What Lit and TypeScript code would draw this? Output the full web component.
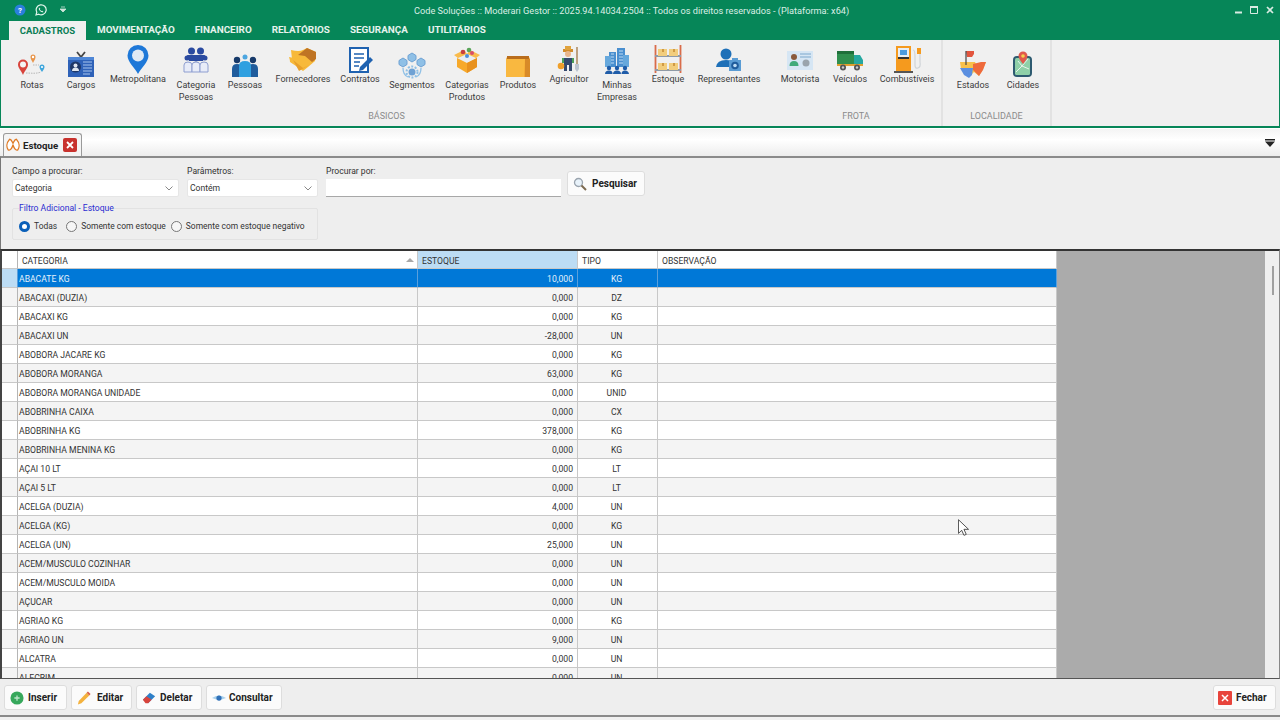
import { LitElement, html, css, svg } from "lit";
import { customElement } from "lit/decorators.js";

const I: Record<string, unknown> = {
  rotas: svg`<path d="M5 25C3 20 0 18 0 14.500a5 5 0 0 1 10 0C10 18 7 20 5 25Z" fill="#d8443c"/><circle cx="5" cy="14.500" r="3" fill="#f4f4f4"/><path d="M15 13C13.500 10 12.500 9 12.500 7a2.500 2.500 0 0 1 5 0C17.500 9 16.500 10 15 13Z" fill="#e8954a"/><circle cx="15" cy="7" r="1.200" fill="#fff"/><path d="M24 22C22.500 19.500 21.500 18.500 21.500 17a2.500 2.500 0 0 1 5 0C26.500 18.500 25.500 19.500 24 22Z" fill="#3fa6dc"/><circle cx="24" cy="17" r="1.100" fill="#fff"/><path d="M15 15l6 0M8 23c5 0 10 1 15-1" stroke="#b8b8b8" stroke-width="1" stroke-dasharray="1.500 1" fill="none"/>`,
  cargos: svg`<path d="M10 1l4 5 4-5" stroke="#444" stroke-width="1.800" fill="none"/><rect x="1" y="6" width="26" height="20" fill="#2f62b8"/><rect x="1" y="6" width="26" height="3" fill="#4e86d6"/><circle cx="8.500" cy="16" r="5.500" fill="#1e3768"/><circle cx="8.500" cy="14.500" r="2" fill="#dfe6f0"/><path d="M5 20a3.500 3.500 0 0 1 7 0Z" fill="#dfe6f0"/><path d="M16 11h9M16 14h9M16 17h9M16 20h9M16 23h7" stroke="#a8c4ee" stroke-width="1"/>`,
  metro: svg`<path d="M14 28C11 22 3.500 16 3.500 9.500a10.500 10.500 0 0 1 21 0C24.500 16 17 22 14 28Z" fill="#1e78d8"/><circle cx="14" cy="9.500" r="6" fill="#dfe9f4"/>`,
  catpess: svg`<g fill="#2a4aa0"><circle cx="9.500" cy="5" r="3.500"/><circle cx="18.500" cy="5" r="3.500"/><circle cx="5" cy="12" r="2.500"/><circle cx="14" cy="13" r="2.500"/><circle cx="23" cy="12" r="2.500"/><path d="M5 9h18l-2 6H7Z"/></g><g fill="#e8ecf8" stroke="#8e9ed0" stroke-width="1"><path d="M2 26V19q0-3 4-3t4 3v7Z"/><path d="M10 26V19q0-3 4-3t4 3v7Z"/><path d="M18 26V19q0-3 4-3t4 3v7Z"/></g>`,
  pessoas: svg`<circle cx="14" cy="6" r="2.500" fill="#4da6e0"/><circle cx="6" cy="9" r="3.200" fill="#173a6a"/><circle cx="22" cy="9" r="3.200" fill="#173a6a"/><path d="M1 26V18q0-5 5-5t5 5v8Z" fill="#1f5c9c"/><path d="M17 26V18q0-5 5-5t5 5v8Z" fill="#1f5c9c"/><path d="M8 26V15q0-5 6-5t6 5v11Z" fill="#2fa0e0"/>`,
  fornec: svg`<path d="M2 4q8 2 12 0l3 8-5 5-9-4Z" fill="#f7b93a"/><path d="M14 4l4-2 9 4-1 9-7 6-5 4-4-3-9-6q0-2-1-5l10 2Z" fill="#f7b93a"/><path d="M9 9l9-7 9 4v7l-4 3-7-6Z" fill="#bf7424"/><path d="M4 14l10 8 6-3-10 6Z" fill="#e89f2a"/>`,
  contr: svg`<path d="M4 2h18v24H4Z" fill="#fff" stroke="#1f62b0" stroke-width="2"/><path d="M8 8h10M8 12h10M8 16h6M8 20h5" stroke="#1f62b0" stroke-width="1.600"/><path d="M14 21l10-10 3 3-10 10-4 1Z" fill="#1f62b0"/>`,
  segm: svg`<g fill="#8fc0e6" stroke="#6fa2d4" stroke-width="1"><path d="M14 2l4 2.500v4L14 11l-4-2.500v-4Z"/><path d="M5 7l4 2.500v4L5 16l-4-2.500v-4Z"/><path d="M23 7l4 2.500v4L23 16l-4-2.500v-4Z"/></g><circle cx="14" cy="21" r="3.500" fill="#6fa2d4"/><circle cx="14" cy="21" r="5.500" fill="none" stroke="#8fc0e6" stroke-width="2" stroke-dasharray="2 1.500"/><path d="M5 17q0 7 5 9M23 17q0 7-5 9" stroke="#8fc0e6" stroke-width="1.300" fill="none"/>`,
  catprod: svg`<path d="M4 12l10-5 10 5v9l-10 6-10-6Z" fill="#f7a92a"/><path d="M4 12l10 5 10-5-10-5Z" fill="#e8edf2"/><path d="M14 17v10l10-6v-9Z" fill="#e8911e"/><path d="M1 9l4 3 9-4-3-4ZM27 9l-4 3-9-4 3-4Z" fill="#f9bb4c"/><circle cx="10" cy="6" r="2.300" fill="#c8403e"/><circle cx="16" cy="4" r="2.300" fill="#5aa55a"/><circle cx="19" cy="7" r="2" fill="#d84d68"/><circle cx="14" cy="10" r="2" fill="#4b8fd8"/>`,
  prod: svg`<path d="M3 6h22l1 2v18H2V8Z" fill="#f3a52e"/><path d="M2 8h19l-1 18H2Z" fill="#f9b840"/><path d="M3 5h22v3H3Z" fill="#b96d1c"/><path d="M21 8h5v18h-5Z" fill="#d88a28"/>`,
  agric: svg`<path d="M8 4h10v3H8Z" fill="#d28c2c"/><path d="M10 1h6v4h-6Z" fill="#e0a23c"/><circle cx="13" cy="9" r="3" fill="#e8b68c"/><path d="M7 13h12v5H7Z" fill="#4ba05a"/><path d="M9 13h8v13h-3v-6h-2v6H9Z" fill="#34496e"/><circle cx="6" cy="21" r="3.300" fill="#ef9f2a"/><path d="M22 2v17" stroke="#9a6b35" stroke-width="1.200"/><path d="M20 19h4v5l-2 3-2-3Z" fill="#bcc4d0"/>`,
  minhas: svg`<path d="M6 6h7v15H6ZM14 2h8v19h-8Z" fill="#4a8fcf"/><path d="M2 10h6v11H2ZM20 9h6v12h-6Z" fill="#66a8dc"/><path d="M8 8h3M8 11h3M8 14h3M8 17h3M16 5h4M16 8h4M16 11h4M16 14h4M16 17h4" stroke="#bddcf4" stroke-width="1.200"/><g fill="#1f5ca8"><circle cx="6" cy="22" r="2.200"/><circle cx="14" cy="22" r="2.200"/><circle cx="22" cy="22" r="2.200"/><path d="M2 28q0-3.500 4-3.500t3.500 3.500ZM10 28q0-3.500 4-3.500t4 3.500ZM18.500 28q0-3.500 3.500-3.500t4 3.500Z"/></g>`,
  estoque: svg`<path d="M1.500 0v28M26.500 0v28" stroke="#d96c4a" stroke-width="1.800"/><path d="M1 11h26M1 25h26" stroke="#8f9aa6" stroke-width="2"/><path d="M4 4h9v7H4ZM15 4h9v7h-9ZM4 18h9v7H4ZM15 18h9v7h-9Z" fill="#f2cd7c"/><path d="M8 4h2v3H8ZM19 4h2v3h-2ZM8 18h2v3H8ZM19 18h2v3h-2Z" fill="#d09a44"/>`,
  repr: svg`<circle cx="11" cy="8" r="5.500" fill="#1e70b8"/><path d="M1 21q1-7 10-7 6 0 8 3v4Z" fill="#1e70b8"/><path d="M14 14h12v11H14Z" fill="#5a9cd4" /><circle cx="20" cy="19.500" r="3.800" fill="#1f5c9c"/><circle cx="20" cy="19.500" r="1.800" fill="#bcdcf4"/><path d="M17 12h6v2h-6Z" fill="#5a9cd4"/>`,
  motor: svg`<rect x="1" y="5" width="26" height="19" fill="#d6e6f4"/><circle cx="8" cy="11" r="3" fill="#8a5a3c"/><path d="M3.500 20q0-5 4.500-5t4.500 5Z" fill="#3faa7a"/><path d="M14 8h11M14 11h11" stroke="#7da8cc" stroke-width="1"/><circle cx="20" cy="17" r="3.500" fill="#9aa4ac"/>`,
  veic: svg`<path d="M1 5h17v13H1Z" fill="#2f8f4e"/><path d="M1 5h17v3H1Z" fill="#1f6f3a"/><path d="M18 9h6l3 5v5h-9Z" fill="#25a8a0"/><path d="M1 18h26v2H1Z" fill="#e0a030"/><circle cx="7" cy="21.500" r="3" fill="#555"/><circle cx="21" cy="21.500" r="3" fill="#555"/><circle cx="7" cy="21.500" r="1.200" fill="#ccc"/><circle cx="21" cy="21.500" r="1.200" fill="#ccc"/>`,
  comb: svg`<path d="M3 1h15v25H3Z" fill="#f59a1e"/><path d="M1 26h19v2H1Z" fill="#555"/><path d="M5 3h11v10H5Z" fill="#e8eef4"/><path d="M7 5h7v5H7Z" fill="#4b9be0"/><path d="M5 12h11v2H5Z" fill="#333"/><path d="M20 5q2 0 2 6v9q0 4 3 3t2-6V8" fill="none" stroke="#d0d4d8" stroke-width="1.200"/><path d="M24 3h4v6h-4Z" fill="#f59a1e"/>`,
  estados: svg`<path d="M1 12h15l2 4 4-3 5-1-3 7-4 7-5-4-3 3-5-3-1-3H2Z" fill="#f8c04a"/><path d="M1 18h13l-1 7-3 3-5-3Z" fill="#5b8fe0"/><path d="M14 14l8-2 5 0-3 8-4 6-6-6Z" fill="#ee6a3c"/><path d="M7 1h8v3l-2 3H8Z" fill="#e2553e"/><path d="M7 1v14" stroke="#444" stroke-width="1.200"/>`,
  cidades: svg`<rect x="4" y="6" width="19" height="21" rx="4" fill="#2d5a70"/><rect x="6" y="8" width="15" height="17" rx="1.500" fill="#8fd0a8"/><path d="M7 22l6-6 7 3M9 11l4 5 6-7" stroke="#e8f4ec" stroke-width="1" fill="none"/><path d="M14 14C12 11 9.500 9 9.500 6a4.500 4.500 0 0 1 9 0C18.500 9 16 11 14 14Z" fill="#e0584c"/><circle cx="14" cy="6" r="1.800" fill="#f4d04c"/>`,
};

type Item = { l: string[]; w: number; cy: number; low: boolean; i: string };
const basicos: Item[] = [
  { l: ["Rotas"], w: 60, cy: 64, low: true, i: "rotas" },
  { l: ["Cargos"], w: 38, cy: 65, low: true, i: "cargos" },
  { l: ["Metropolitana"], w: 76, cy: 60, low: false, i: "metro" },
  { l: ["Categoria", "Pessoas"], w: 40, cy: 60, low: true, i: "catpess" },
  { l: ["Pessoas"], w: 58, cy: 65, low: true, i: "pessoas" },
  { l: ["Fornecedores"], w: 58, cy: 60, low: false, i: "fornec" },
  { l: ["Contratos"], w: 56, cy: 60, low: false, i: "contr" },
  { l: ["Segmentos"], w: 48, cy: 65, low: true, i: "segm" },
  { l: ["Categorias", "Produtos"], w: 62, cy: 60, low: true, i: "catprod" },
  { l: ["Produtos"], w: 40, cy: 65, low: true, i: "prod" },
  { l: ["Agricultor"], w: 62, cy: 59, low: false, i: "agric" },
  { l: ["Minhas", "Empresas"], w: 34, cy: 60, low: true, i: "minhas" },
  { l: ["Estoque"], w: 68, cy: 59, low: false, i: "estoque" },
  { l: ["Representantes"], w: 54, cy: 60, low: false, i: "repr" },
];
const frota: Item[] = [
  { l: ["Motorista"], w: 58, cy: 60, low: false, i: "motor" },
  { l: ["Veículos"], w: 42, cy: 60, low: false, i: "veic" },
  { l: ["Combustíveis"], w: 72, cy: 59, low: false, i: "comb" },
];
const local: Item[] = [
  { l: ["Estados"], w: 60, cy: 64, low: true, i: "estados" },
  { l: ["Cidades"], w: 40, cy: 64, low: true, i: "cidades" },
];

const rows: [string, string, string][] = [
  ["ABACATE KG", "10,000", "KG"],
  ["ABACAXI (DUZIA)", "0,000", "DZ"],
  ["ABACAXI KG", "0,000", "KG"],
  ["ABACAXI UN", "-28,000", "UN"],
  ["ABOBORA JACARE KG", "0,000", "KG"],
  ["ABOBORA MORANGA", "63,000", "KG"],
  ["ABOBORA MORANGA UNIDADE", "0,000", "UNID"],
  ["ABOBRINHA CAIXA", "0,000", "CX"],
  ["ABOBRINHA KG", "378,000", "KG"],
  ["ABOBRINHA MENINA KG", "0,000", "KG"],
  ["AÇAI 10 LT", "0,000", "LT"],
  ["AÇAI 5 LT", "0,000", "LT"],
  ["ACELGA (DUZIA)", "4,000", "UN"],
  ["ACELGA (KG)", "0,000", "KG"],
  ["ACELGA (UN)", "25,000", "UN"],
  ["ACEM/MUSCULO COZINHAR", "0,000", "UN"],
  ["ACEM/MUSCULO MOIDA", "0,000", "UN"],
  ["AÇUCAR", "0,000", "UN"],
  ["AGRIAO KG", "0,000", "KG"],
  ["AGRIAO UN", "9,000", "UN"],
  ["ALCATRA", "0,000", "UN"],
  ["ALECRIM", "0,000", "UN"],
];

@customElement("app-root")
export class AppRoot extends LitElement {
  static styles = css`
    :host { display: flex; flex-direction: column; position: relative; width: 1280px; height: 720px; overflow: hidden; background: #eeeeee; font: 9px Roboto, sans-serif; color: #333; }
    * { box-sizing: border-box; }
    .title { height: 20px; background: #068658; display: flex; align-items: center; color: #dcefe6; flex: none; position: relative; padding-left: 14px; gap: 9px; }
    .title .text { position: absolute; left: 414px; top: 4px; white-space: nowrap; line-height: 14px; font-size: 9.2px; }
    .ctrl { margin-left: auto; display: flex; gap: 8px; padding-right: 6px; align-items: center; }
    .menu { height: 20px; background: #068658; display: flex; flex: none; padding-left: 9px; font-weight: 700; color: #e6f3ed; font-size: 9.9px; }
    .menu div { line-height: 20px; white-space: nowrap; margin-right: 20px; }
    .menu .on { background: #f0f0f0; color: #0a7d55; margin-right: 11px; width: 77px; text-align: center; margin-top: 1px; line-height: 19px; font-size: 9.5px; }
    .ribbon { height: 88px; flex: none; background: #f0f0f0; border: 1px solid #068658; border-width: 0 1px 2px; display: flex; padding-left: 1px; }
    .grp { position: relative; display: flex; flex-direction: column; flex: none; }
    .grp.div { border-right: 2px solid #e2e2e2; }
    .items { display: flex; height: 70px; padding-top: 2px; }
    .cap { text-align: center; color: #8b8b8b; line-height: 12px; }
    .item { display: flex; flex-direction: column; align-items: center; flex: none; }
    .ico { height: 31px; display: flex; justify-content: center; }
    .ico.low { height: 37px; }
    .ico svg { width: 28px; height: 28px; flex: none; overflow: visible; }
    .lbl { line-height: 12px; white-space: nowrap; text-align: center; color: #3c3c3c; }
    .tabs { height: 28px; flex: none; background: linear-gradient(#f4f4f4, #ffffff 40%, #ededed); display: flex; align-items: flex-end; padding-left: 3px; position: relative; border-top: 1px solid #fff; }
    .tab { height: 23px; width: 79px; background: #f4f4f4; border: 1px solid #9a9a9a; border-bottom: 0; border-radius: 3px 3px 0 0; display: flex; align-items: center; padding-left: 2px; gap: 3px; font-weight: 700; color: #222; font-size: 9.7px; }
    .tab .x { width: 14px; height: 14px; background: #c8322e; border-radius: 2px; margin-left: 2px; color: #fff; display: flex; align-items: center; justify-content: center; }
    .collapse { position: absolute; right: 5px; top: 9px; width: 10px; height: 10px; }
    .panel { height: 93px; flex: none; background: #eeeeee; border-top: 2px solid #8b8b8b; padding: 7px 0 0 11px; border-left: 1px solid #777; font-size: 8.6px; }
    .f-row { display: flex; gap: 8px; align-items: flex-start; }
    .fld { display: flex; flex-direction: column; }
    .fld label { line-height: 13px; height: 14px; color: #333; }
    .sel { height: 18px; background: #fff; border-radius: 2px; border: 1px solid #e6e6e6; display: flex; align-items: center; justify-content: space-between; padding: 0 5px 0 2px; }
    .inp { height: 18px; width: 235px; background: #fff; border-bottom: 1px solid #a8a8a8; }
    .btn { height: 25px; background: #fbfbfb; border: 1px solid #dddddd; border-radius: 3px; display: flex; align-items: center; font-weight: 700; color: #222; flex: none; font-size: 10px; }
    .search { width: 78px; margin-top: 6px; padding-left: 5px; gap: 5px; margin-left: -2px; }
    fieldset { margin: 5px 0 0; width: 306px; height: 38px; padding: 0 0 0 6px; border: 1px solid #e2e2e2; border-radius: 2px; display: flex; align-items: center; }
    legend { padding: 0; color: #2a2ad0; line-height: 12px; }
    .opts { display: flex; align-items: center; margin-top: -1px; font-size: 8.45px; }
    .r { width: 11px; height: 11px; border-radius: 50%; border: 1px solid #777; background: #f6f6f6; margin-right: 4px; flex: none; }
    .r.on { border: 3px solid #0a5fb8; background: #fff; }
    .opts span { margin-right: 5px; white-space: nowrap; }
    .opts span.first { margin-right: 9px; }
    .grid { flex: 1; min-height: 0; display: flex; background: #ababab; border-top: 2px solid #333; border-left: 2px solid #444; border-right: 1px solid #888; border-bottom: 1px solid #555; overflow: hidden; }
    .tbl { width: 1055px; flex: none; background: #fff; }
    .tr { display: grid; grid-template-columns: 16px 400px 160px 80px 399px; grid-template-rows: 19px; height: 19px; line-height: 20px; color: #333; font-size: 8.65px; }
    .tr > div { border-right: 1px solid #c8c8c8; border-bottom: 1px solid #c8c8c8; padding: 0 4px 0 1px; white-space: nowrap; overflow: hidden; }
    .tr > div:first-child { border-right: 1px solid #b5b5b5; }
    .tr .n { text-align: right; padding-right: 4px; }
    .tr > .c { text-align: center; padding: 0 2px 0 0; }
    .tr.alt { background: #f4f4f4; }
    .tr.sel2 { background: #0078d7; color: #e4f1fb; }
    .tr.sel2 > div { border-right-color: #5a9fdc; }
    .tr.sel2 > div:first-child { background: #bcdcf4; }
    .tr.hd { background: #fff; grid-template-rows: 18px; height: 18px; line-height: 21px; }
    .tr.hd > div { padding-left: 4px; position: relative; }
    .tr.hd .act { background: #bcdcf4; }
    .arrow { position: absolute; right: 3px; top: 7px; width: 0; height: 0; border: 4px solid transparent; border-top: 0; border-bottom: 4px solid #a8a8a8; }
    .gray { flex: 1; }
    .sb { width: 14px; flex: none; background: #efefef; position: relative; }
    .thumb { position: absolute; left: 7px; top: 15px; width: 2px; height: 29px; background: #a0a0a0; }
    .foot { height: 38px; flex: none; border-bottom: 2px solid #8a8a8a; display: flex; align-items: flex-start; gap: 4px; padding: 6px 4px 0; background: #eeeeee; }
    .foot .btn { gap: 4px; padding-left: 5px; }
    .foot .btn svg { width: 14px; height: 14px; flex: none; }
    .foot .btn.ed { gap: 6px; }
    .foot .btn.cn { gap: 3px; }
    .foot .btn.fe { margin-left: auto; padding-left: 4px; }
    .fim { height: 3px; flex: none; background: #f0f0f0; }
    .cursor { position: absolute; left: 958px; top: 519px; width: 11px; height: 17px; }
  `;

  private item(t: Item) {
    return html`<div class="item" style="width:${t.w}px">
      <div class="ico ${t.low ? "low" : ""}"><svg viewBox="0 0 28 28" style="margin-top:${t.cy - 14 - 42}px">${I[t.i]}</svg></div>
      ${t.l.map((x) => html`<div class="lbl">${x}</div>`)}
    </div>`;
  }

  private group(items: Item[], w: number, cap: string, div: boolean) {
    return html`<div class="grp ${div ? "div" : ""}" style="width:${w}px">
      <div class="items">${items.map((i) => this.item(i))}</div>
      <div class="cap">${cap}</div>
    </div>`;
  }

  render() {
    return html`
      <div class="title">
        <svg width="12" height="12" viewBox="0 0 12 12"><circle cx="6" cy="6" r="5.500" fill="#2a7fdc"/><text x="6" y="9" text-anchor="middle" font-size="8" font-weight="700" fill="#fff">?</text></svg>
        <svg width="12" height="12" viewBox="0 0 12 12"><path d="M1 11l.8-2.800A5 5 0 1 1 3.800 10.200Z" fill="none" stroke="#dff5ea" stroke-width="1.200"/><path d="M4 3.500q-1 1.500 1 3.500t3.500 1l-1.200-1.300-1 .4-1.400-1.400.4-1Z" fill="#dff5ea"/></svg>
        <svg width="6" height="8" viewBox="0 0 6 8" style="margin-left:4px"><path d="M1 1h4M0 3h6L3 6Z" stroke="#cfe5da" stroke-width=".8" fill="#cfe5da"/></svg>
        <div class="text">Code Soluções :: Moderari Gestor :: 2025.94.14034.2504 :: Todos os direitos reservados - (Plataforma: x64)</div>
        <div class="ctrl">
          <svg width="7" height="8" viewBox="0 0 7 8"><path d="M0 6.500h7" stroke="#d8ebe2" stroke-width="2"/></svg>
          <svg width="8" height="8" viewBox="0 0 8 8"><path d="M.5 1.500h7v6h-7Z" fill="none" stroke="#d8ebe2"/><path d="M0 1h8" stroke="#d8ebe2" stroke-width="2"/></svg>
          <svg width="8" height="8" viewBox="0 0 8 8"><path d="M1 1l6 6M7 1L1 7" stroke="#d8ebe2" stroke-width="1.700"/></svg>
        </div>
      </div>
      <div class="menu">
        <div class="on">CADASTROS</div>
        <div>MOVIMENTAÇÃO</div><div>FINANCEIRO</div><div>RELATÓRIOS</div><div>SEGURANÇA</div><div>UTILITÁRIOS</div>
      </div>
      <div class="ribbon">
        ${this.group(basicos, 769, "BÁSICOS", false)}
        ${this.group(frota, 172, "FROTA", true)}
        ${this.group(local, 109, "LOCALIDADE", true)}
      </div>
      <div class="tabs">
        <div class="tab">
          <svg width="14" height="14" viewBox="0 0 16 16"><path d="M4 1.500C1 5 0 10 2.500 13.500 5 15 7 11 8 8 9 11 11 15 13.500 13.500 16 10 15 5 12 1.500 10 1 9 4 8 6 7 4 6 1 4 1.500Z" fill="#fff" stroke="#e07a24" stroke-width="1.500"/></svg>
          <span>Estoque</span>
          <div class="x"><svg width="8" height="8" viewBox="0 0 8 8"><path d="M1 1l6 6M7 1L1 7" stroke="#fff" stroke-width="1.800"/></svg></div>
        </div>
        <svg class="collapse" viewBox="0 0 10 10"><path d="M0 1h10v1.500H0ZM0 3.500h10L5 9Z" fill="#222"/></svg>
      </div>
      <div class="panel">
        <div class="f-row">
          <div class="fld" style="width:167px"><label>Campo a procurar:</label><div class="sel"><span>Categoria</span><svg width="8" height="5" viewBox="0 0 8 5"><path d="M.5 .5L4 4 7.500 .5" fill="none" stroke="#888"/></svg></div></div>
          <div class="fld" style="width:131px"><label>Parâmetros:</label><div class="sel"><span>Contém</span><svg width="8" height="5" viewBox="0 0 8 5"><path d="M.5 .5L4 4 7.500 .5" fill="none" stroke="#888"/></svg></div></div>
          <div class="fld"><label>Procurar por:</label><div class="inp"></div></div>
          <div class="btn search">
            <svg width="14" height="14" viewBox="0 0 14 14"><circle cx="5.500" cy="5.500" r="4" fill="#e8f2fa" stroke="#9aa4ae" stroke-width="1.300"/><path d="M8.500 8.500l4.500 4.500" stroke="#7b6a50" stroke-width="2"/></svg>
            <span>Pesquisar</span>
          </div>
        </div>
        <fieldset>
          <legend>Filtro Adicional - Estoque</legend>
          <div class="opts">
            <div class="r on"></div><span class="first">Todas</span>
            <div class="r"></div><span>Somente com estoque</span>
            <div class="r"></div><span>Somente com estoque negativo</span>
          </div>
        </fieldset>
      </div>
      <div class="grid">
        <div class="tbl">
          <div class="tr hd"><div></div><div>CATEGORIA<i class="arrow"></i></div><div class="act">ESTOQUE</div><div>TIPO</div><div>OBSERVAÇÃO</div></div>
          ${rows.map((r, i) => html`<div class="tr ${i === 0 ? "sel2" : i % 2 ? "alt" : ""}"><div></div><div>${r[0]}</div><div class="n">${r[1]}</div><div class="c">${r[2]}</div><div></div></div>`)}
        </div>
        <div class="gray"></div>
        <div class="sb"><div class="thumb"></div></div>
      </div>
      <div class="foot">
        <div class="btn" style="width:63px"><svg viewBox="0 0 16 16"><circle cx="8" cy="8" r="7.500" fill="#37a85c"/><path d="M8 5v6M5 8h6" stroke="#bfe6cc" stroke-width="1.500"/></svg><span>Inserir</span></div>
        <div class="btn ed" style="width:61px"><svg viewBox="0 0 16 16"><path d="M1 15.500l1-4L11 2l3 3-9 9Z" fill="#f4b23e"/><path d="M11 2l1.500-1.500 3 3L14 5Z" fill="#d8604a"/></svg><span>Editar</span></div>
        <div class="btn" style="width:66px"><svg viewBox="0 0 16 16"><path d="M1 10l8-8 6 4-8 8Z" fill="#2f80c8"/><path d="M1 10l4-4 6 4-4 4H4Z" fill="#d8443c"/></svg><span>Deletar</span></div>
        <div class="btn cn" style="width:76px"><svg viewBox="0 0 16 16"><path d="M0 8q8-6 16 0-8 4-16 0Z" fill="#a8d0ec"/><circle cx="8" cy="8" r="3" fill="#2f70b8"/></svg><span>Consultar</span></div>
        <div class="btn fe" style="width:63px"><svg viewBox="0 0 14 14"><rect width="14" height="14" rx="1" fill="#e8443c"/><path d="M4 4l6 6M10 4l-6 6" stroke="#fff" stroke-width="1.500"/></svg><span>Fechar</span></div>
      </div>
      <div class="fim"></div>
      <svg class="cursor" viewBox="0 0 12 18"><path d="M.5 .5v15l3.500-3.500 2.500 5.500 2.500-1-2.500-5.500h5Z" fill="#fff" stroke="#444" stroke-width="1"/></svg>
    `;
  }
}
